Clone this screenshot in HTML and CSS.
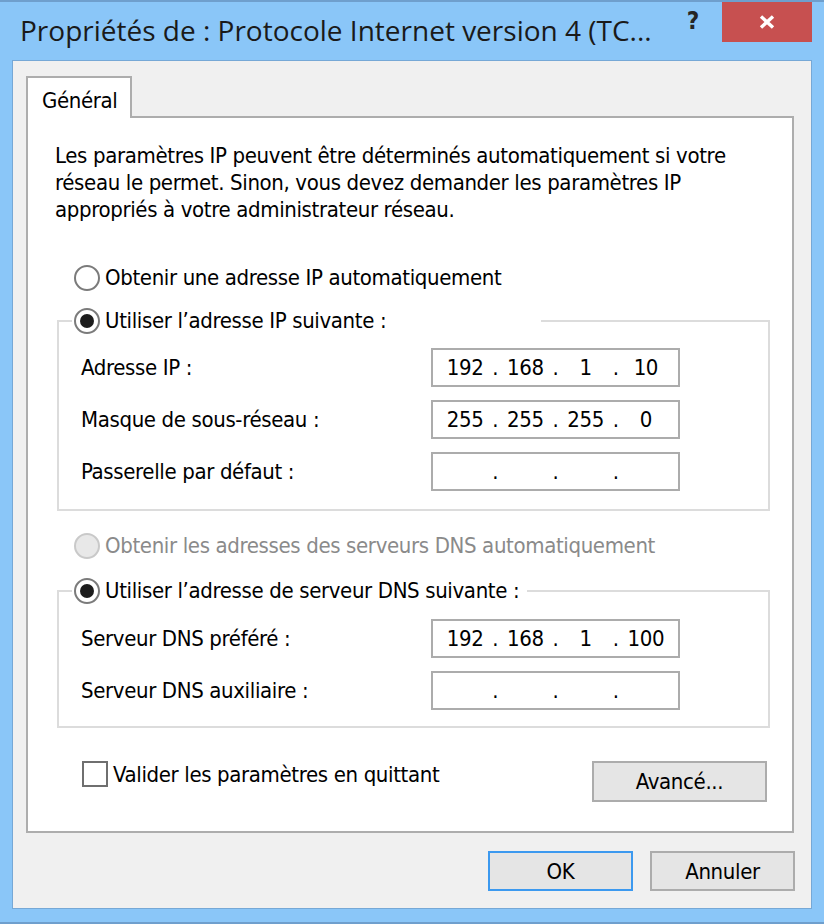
FILE: index.html
```html
<!DOCTYPE html>
<html lang="fr">
<head>
<meta charset="utf-8">
<title>Propriétés de : Protocole Internet version 4</title>
<link rel="stylesheet" href="styles.css">
</head>
<body>
<div class="window">
  <div class="titlebar">
    <div class="title">Propriétés de : Protocole Internet version 4 (TC...</div>
    <div class="help">?</div>
    <div class="close">
      <svg width="16" height="14" viewBox="0 0 16 14"><path d="M2 1.5 L14 12.5 M14 1.5 L2 12.5" stroke="#fff" stroke-width="3.4" fill="none"/></svg>
    </div>
  </div>
  <div class="client">
    <div class="tabs"><div class="tab">Général</div></div>
    <div class="panel">
      <p class="intro">Les paramètres IP peuvent être déterminés automatiquement si votre<br>réseau le permet. Sinon, vous devez demander les paramètres IP<br>appropriés à votre administrateur réseau.</p>

      <div class="radio-row auto-ip"><span class="radio"></span><span>Obtenir une adresse IP automatiquement</span></div>

      <fieldset class="group group-ip">
        <legend class="radio-row legend-ip"><span class="radio checked"></span><span>Utiliser l’adresse IP suivante :</span></legend>
        <div class="field"><span class="label">Adresse IP :</span>
          <div class="ip"><span class="seg">192</span><span class="dot">.</span><span class="seg">168</span><span class="dot">.</span><span class="seg">1</span><span class="dot">.</span><span class="seg">10</span></div>
        </div>
        <div class="field"><span class="label">Masque de sous-réseau :</span>
          <div class="ip"><span class="seg">255</span><span class="dot">.</span><span class="seg">255</span><span class="dot">.</span><span class="seg">255</span><span class="dot">.</span><span class="seg">0</span></div>
        </div>
        <div class="field"><span class="label">Passerelle par défaut :</span>
          <div class="ip"><span class="seg"></span><span class="dot">.</span><span class="seg"></span><span class="dot">.</span><span class="seg"></span><span class="dot">.</span><span class="seg"></span></div>
        </div>
      </fieldset>

      <div class="radio-row auto-dns disabled"><span class="radio"></span><span>Obtenir les adresses des serveurs DNS automatiquement</span></div>

      <fieldset class="group group-dns">
        <legend class="radio-row legend-dns"><span class="radio checked"></span><span>Utiliser l’adresse de serveur DNS suivante :</span></legend>
        <div class="field"><span class="label">Serveur DNS préféré :</span>
          <div class="ip"><span class="seg">192</span><span class="dot">.</span><span class="seg">168</span><span class="dot">.</span><span class="seg">1</span><span class="dot">.</span><span class="seg">100</span></div>
        </div>
        <div class="field"><span class="label">Serveur DNS auxiliaire :</span>
          <div class="ip"><span class="seg"></span><span class="dot">.</span><span class="seg"></span><span class="dot">.</span><span class="seg"></span><span class="dot">.</span><span class="seg"></span></div>
        </div>
      </fieldset>

      <div class="check-row">
        <div class="check"><span class="box"></span><span>Valider les paramètres en quittant</span></div>
        <button class="btn btn-adv">Avancé...</button>
      </div>
    </div>
    <div class="buttons">
      <button class="btn btn-default">OK</button>
      <button class="btn">Annuler</button>
    </div>
  </div>
</div>
</body>
</html>
```
FILE: styles.css
```css
* { box-sizing: border-box; }
html, body { margin: 0; padding: 0; }
body {
  width: 824px;
  height: 924px;
  overflow: hidden;
  background: #8ac6f8;
  font-family: "DejaVu Sans Condensed", "DejaVu Sans", sans-serif;
  font-stretch: semi-condensed;
  font-size: 22px;
  letter-spacing: -0.36px;
  color: #000;
}
.window {
  height: 924px;
  display: flex;
  flex-direction: column;
  background: #8ac6f8;
  border-top: 2px solid #6f9fcd;
  border-bottom: 2px solid #6f9fcd;
}
.titlebar {
  height: 58px;
  display: flex;
  align-items: flex-start;
}
.title {
  flex: 1;
  padding: 8px 0 0 20px;
  font-family: "Open Sans", "Noto Sans", sans-serif;
  font-stretch: normal;
  font-size: 28px;
  letter-spacing: 0;
  line-height: 40px;
  color: #1a1a1a;
  white-space: nowrap;
}
.help {
  width: 58px;
  height: 40px;
  display: flex;
  justify-content: center;
  align-items: center;
  font-family: "DejaVu Sans", sans-serif;
  font-weight: bold;
  font-size: 24px;
  letter-spacing: 0;
  color: #262626;
  padding-bottom: 2px;
}
.close {
  width: 90px;
  height: 40px;
  margin-right: 12px;
  background: #c75050;
  display: flex;
  justify-content: center;
  align-items: center;
}
.client {
  flex: 1;
  margin: 0 12px 13px 12px;
  border: 1px solid #76a8d6;
  background: #f0f0f0;
  display: flex;
  flex-direction: column;
}
.tabs {
  padding: 15px 0 0 13px;
  display: flex;
}
.tab {
  width: 106px;
  height: 42px;
  border: 2px solid #adadad;
  border-bottom: none;
  background: #fff;
  margin-bottom: -2px;
  padding: 9px 0 0 14px;
  line-height: 27px;
  position: relative;
  z-index: 1;
}
.panel {
  flex: 1;
  margin: 0 17px 0 13px;
  border: 2px solid #adadad;
  background: #fff;
  display: flex;
  flex-direction: column;
}
.intro {
  margin: 24px 0 0 27px;
  line-height: 27px;
}
.radio-row {
  display: flex;
  align-items: center;
  gap: 5px;
  height: 30px;
  line-height: 30px;
  white-space: nowrap;
}
.radio {
  width: 26px;
  height: 26px;
  border-radius: 50%;
  border: 2px solid #7b7b7b;
  background: #fff;
  display: flex;
  justify-content: center;
  align-items: center;
  flex: none;
}
.radio.checked::after {
  content: "";
  width: 14px;
  height: 14px;
  border-radius: 50%;
  background: #1c1c1c;
}
.auto-ip { margin: 40px 0 0 46px; }
.disabled { color: #8a8a8a; }
.disabled .radio { border-color: #c9c9c9; background: #e8e8e8; }
.auto-dns { margin: 20px 0 0 46px; }

.group {
  margin: 0 22px 0 29px;
  border: 2px solid #dcdcdc;
  padding: 12px 88px 18px 13px;
  min-width: 0;
}
.group-ip { margin-top: 13px; }
.group-dns { margin-top: 15px; padding-top: 13px; padding-bottom: 16px; }
.group legend {
  padding: 0 0 0 2px;
  margin: 0;
  background: #fff;
}
.legend-ip { width: 469px; }
.legend-dns { width: 455px; }
.field {
  display: flex;
  align-items: center;
  height: 39px;
}
.field + .field { margin-top: 13px; }
.label {
  flex: 1;
  padding-left: 9px;
  white-space: nowrap;
}
.ip {
  width: 249px;
  height: 39px;
  border: 2px solid #acacac;
  display: flex;
  align-items: center;
  padding: 0 2px;
  background: #fff;
}
.seg {
  flex: 1;
  text-align: center;
}
.dot {
  width: 0;
  display: flex;
  justify-content: center;
}
.check-row {
  margin: 33px 25px 0 54px;
  display: flex;
  justify-content: space-between;
  align-items: flex-start;
}
.check {
  display: flex;
  align-items: center;
  gap: 5px;
  height: 26px;
  white-space: nowrap;
}
.box {
  width: 26px;
  height: 26px;
  border: 2px solid #6f6f6f;
  background: #fff;
}
.btn {
  font: inherit;
  letter-spacing: inherit;
  color: #000;
  background: #e5e5e5;
  border: 2px solid #acacac;
  padding: 0;
  margin: 0;
}
.btn-adv { width: 175px; height: 41px; }
.buttons {
  display: flex;
  justify-content: flex-end;
  gap: 17px;
  padding: 18px 16px 17px 0;
}
.buttons .btn { width: 145px; height: 40px; }
.btn-default { border-color: #3c99ef; }
```
